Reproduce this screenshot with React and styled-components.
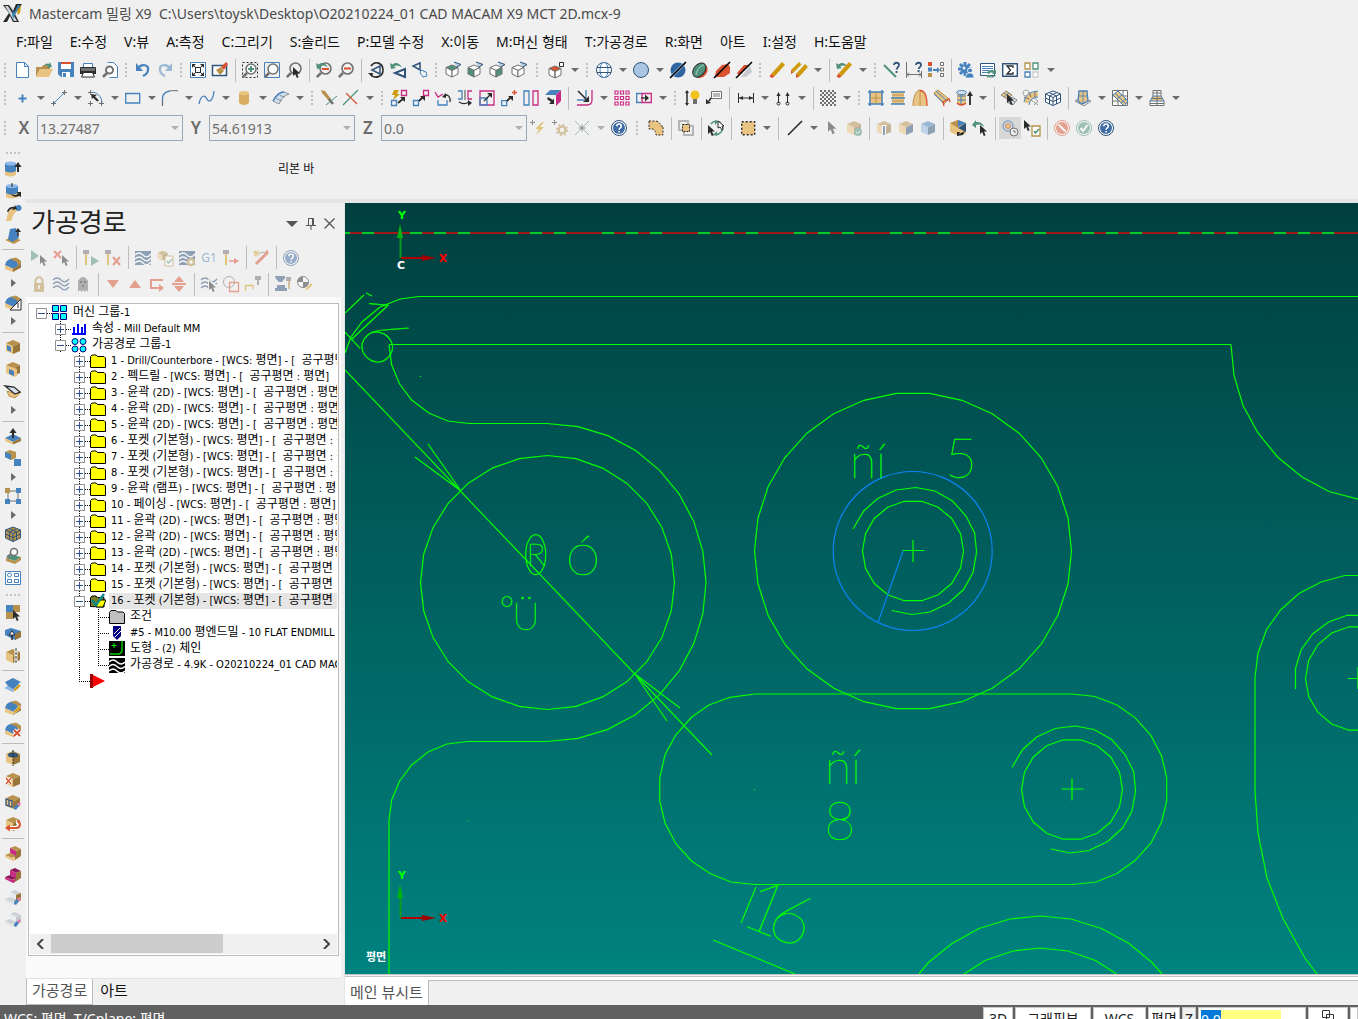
import React from 'react';
import styled, { createGlobalStyle, css } from 'styled-components';

const theme = {
  bg: '#f0f0f0',
  blue: '#4682bd',
  navy: '#2f5379',
  green: '#4f917b',
  red: '#d9512f',
  tan: '#e9c382',
  brown: '#b8924c',
  umber: '#9a753a',
  gray: '#707070',
  dark: '#2b2b2b',
  pink: '#c92a83',
  gold: '#cf9a0a',
};

const uiFont = '"Noto Sans", "Noto Sans CJK KR", sans-serif';
const treeFont =
  '"DejaVu Sans Condensed", "Liberation Sans", "Noto Sans CJK KR", sans-serif';

const GlobalStyle = createGlobalStyle`
  * {
    box-sizing: border-box;
  }

  body {
    background: ${theme.bg};
    color: #1a1a1a;
    font-family: ${uiFont};
    font-size: 14px;
    margin: 0;
    overflow: hidden;
  }

  button,
  input {
    font: inherit;
  }
`;

/* ---------- icons ---------- */

const { blue, navy, green, red, tan, brown, umber, gray, dark, pink, gold } =
  theme;

const Cube = ({ top = brown, left = tan, right = umber, stroke = 'none' }) => (
  <g stroke={stroke} strokeLinejoin="round">
    <path d="M8 1l7 3-7 3.500-7-3.500z" fill={top} />
    <path d="M1 4l7 3.500V15l-7-3z" fill={left} />
    <path d="M15 4L8 7.500V15l7-3z" fill={right} />
  </g>
);

const Slab = ({ top = blue }) => (
  <g>
    <path d="M0 9l8 3.500V16l-8-3z" fill={tan} />
    <path d="M16 8l-8 4.500V16l8-4.500z" fill={umber} />
    <path d="M0 9c1-3 2-5 5-6l6-1 5 3v3l-8 4.500z" fill={top} />
    <path d="M5 3l6-1.500L16 5v3l-3 1.500c0-2-1-3.500-3-4.500z" fill={brown} />
  </g>
);

const Steps = ({ a = brown, b = tan, c = umber, face = pink }) => (
  <g>
    <path d="M5 3l5-2 6 3-5 2z" fill={a} />
    <path d="M11 6l5-2v7l-6 4-1-4z" fill={c} />
    <path d="M5 3l6 3v5L5 8z" fill={face} />
    <path d="M0 10l5-2 6 3-4 2z" fill={a} />
    <path d="M0 10l7 3 3-1v3l-2 1-8-4z" fill={b} />
  </g>
);

const Cursor = ({ x = 0, y = 0, fill = dark }) => (
  <path
    d="M0 0v9l2.200-2 1.600 4 1.800-.800-1.600-3.800H7z"
    transform={`translate(${x} ${y})`}
    fill={fill}
  />
);

const Lens = ({ children }) => (
  <g fill="none">
    <path d="M5 11L.800 15.200" stroke={gray} strokeWidth="2.500" />
    <circle cx="9.500" cy="6.500" r="5.500" stroke={gray} strokeWidth="1.600" />
    {children}
  </g>
);

const WireCube = ({ top = '#fff', left = '#fff', right = '#fff' }) => (
  <g>
    <g stroke={gray} strokeLinejoin="round">
      <path d="M7 3l6 2.500-6 3-6-3z" fill={top} />
      <path d="M1 5.500l6 3V15l-6-3z" fill={left} />
      <path d="M13 5.500l-6 3V15l6-3z" fill={right} />
    </g>
    <path d="M9 0l7 2.500-5 3" fill="#b9cce2" stroke={navy} />
  </g>
);

const Waves = ({ stroke = navy }) => (
  <path
    d="M0 4q4-4 8 0t8-1M0 8q4-4 8 0t8-1M0 12q4-4 8 0t8-1"
    fill="none"
    stroke={stroke}
    strokeWidth="1.300"
  />
);

const Question = ({ fill = navy }) => (
  <g>
    <circle cx="8" cy="8" r="7.500" fill="#fff" stroke={fill} />
    <circle cx="8" cy="8" r="6" fill="#3f6ca5" />
    <path
      d="M5.800 6.300c0-3 4.500-3 4.500 0 0 1.700-2.200 1.500-2.200 3.400M8.100 11v1.600"
      fill="none"
      stroke="#fff"
      strokeWidth="1.600"
    />
  </g>
);

const Pencil = () => (
  <g>
    <path d="M2.500 11.500L13 0l3 2.800L5.500 14.500z" fill={gold} />
    <path d="M2.500 11.500l3 3-2.500 1.500-2.500-1.500z" fill={red} />
  </g>
);

const MiniPencil = () => (
  <path d="M8 15l1-3 5-5 2 1.500-5 5z" fill={gold} stroke="#fff" strokeWidth=".5" />
);

const Eraser = () => (
  <g>
    <path d="M9 13l3-3 2 2-3 4-2-1z" fill={blue} />
    <path d="M12 10l3-2 1 2-2 2z" fill="#e77cb4" />
  </g>
);

const Back = ({ fill = green }) => (
  <path d="M0 1l1 6 5-1-2-1.500c3-2 5-1 8 1C9 0 5 0 2.500 2.500z" fill={fill} />
);

const icons = {
  new: (
    <path d="M2.500.500h8l4 4v11h-12zM10.500.500v4h4" fill="#fff" stroke={blue} />
  ),
  open: (
    <g>
      <path d="M0 15V5h6l1-2h7v4H4z" fill={brown} />
      <path d="M0 15l4-8h13l-4 8z" fill={tan} />
      <path d="M8 4c1-3 4-3 5-2l1-2 2 5-5 1 1-2c-1-1-3-1-4 0z" fill={green} />
    </g>
  ),
  save: (
    <g>
      <path d="M0 0h16v15H3l-3-3z" fill={blue} />
      <path d="M3 0h10v7H3z" fill="#fff" />
      <path d="M3 0h10v2H3z" fill={red} />
      <path d="M4 10h8v5H4z" fill="#fff" />
      <path d="M5 11h3v4H5z" fill={blue} />
    </g>
  ),
  print: (
    <g>
      <path d="M3.500 5V1.500h9V5" fill="#fff" stroke={blue} />
      <path d="M0 6q0-1 1-1h14q1 0 1 1v6H0z" fill={dark} />
      <path d="M1 6h14v3H1z" fill={gray} />
      <path d="M3.500 10.500h9l2 4.500h-13z" fill="#fff" stroke={dark} />
    </g>
  ),
  preview: (
    <g>
      <path d="M5.500.500h6l4 4v11h-8" fill="#fff" stroke={blue} />
      <path d="M5 11l-4 4" stroke={gray} strokeWidth="2.500" />
      <circle cx="7.500" cy="8" r="3.500" fill="#fff" stroke={gray} strokeWidth="2" />
    </g>
  ),
  undo: (
    <g>
      <path d="M3 6c4-5 11-3 10 2 0 3-3 5-5 6" fill="none" stroke={blue} strokeWidth="2.200" />
      <path d="M1 1v8h7z" fill={blue} />
    </g>
  ),
  redo: (
    <g opacity=".5">
      <path d="M13 6C9 1 2 3 3 8c0 3 3 5 5 6" fill="none" stroke={blue} strokeWidth="2.200" />
      <path d="M15 1v8H8z" fill={blue} />
    </g>
  ),
  fit: (
    <g>
      <path d="M.500.500h15v15H.500z" fill="#fff" stroke={blue} />
      <path d="M5.500 5.500h5v5h-5zM3 3l3 3M13 3l-3 3M3 13l3-3M13 13l-3-3" fill="none" stroke={dark} />
      <path d="M2 2h4L2 6zM14 2v4l-4-4zM2 14v-4l4 4zM14 14h-4l4-4z" fill={dark} />
    </g>
  ),
  repaint: (
    <g>
      <path d="M.500 3.500h14v10H.500z" fill="#fff" stroke={navy} strokeWidth="1.500" />
      <path d="M4 8l5-3 3 4-4 4z" fill={brown} />
      <path d="M9 5l5-5 2 2-4 6z" fill={red} />
    </g>
  ),
  zoomWindow: (
    <g>
      <path d="M.500.500h15v15H.500z" fill="none" stroke={dark} strokeDasharray="2 2" />
      <circle cx="9" cy="7" r="5" fill="#fff" stroke={gray} strokeWidth="1.500" />
      <path d="M6 7h6M9 4v6" stroke={green} strokeWidth="2" />
      <path d="M5 11l-4 4" stroke={gray} strokeWidth="2.500" />
    </g>
  ),
  zoomTarget: (
    <g>
      <path d="M.500.500h15v15H.500z" fill="none" stroke={blue} />
      <circle cx="9" cy="7" r="5" fill="#fff" stroke={gray} strokeWidth="1.500" />
      <path d="M5 11l-4 4" stroke={gray} strokeWidth="2.500" />
    </g>
  ),
  zoomSelect: (
    <g>
      <Lens />
      <Cursor x={7} y={5} />
    </g>
  ),
  unzoomBack: (
    <g>
      <Lens>
        <path d="M6 7h7" stroke={red} strokeWidth="2" />
      </Lens>
      <Back />
    </g>
  ),
  unzoom: (
    <Lens>
      <path d="M6 6.500h7" stroke={red} strokeWidth="2" />
    </Lens>
  ),
  rotate: (
    <g fill="none">
      <path d="M3 4c4-6 12-3 12 4s-8 9-12 5" stroke={dark} strokeWidth="1.600" />
      <path d="M0 11l5 0-1 4z" fill={dark} />
      <path d="M12 4v8L4 8z" stroke={navy} strokeWidth="1.500" />
    </g>
  ),
  prevView: (
    <g>
      <Back />
      <path d="M15 7v8L5 11z" fill="#fff" stroke={navy} strokeWidth="2" />
    </g>
  ),
  nextView: (
    <g fill="none">
      <path d="M8 1v7L1 4z" stroke={navy} strokeWidth="1.500" />
      <path d="M9 8l5 2 1 4-4 1-3-4z" stroke={blue} />
    </g>
  ),
  topView: <WireCube top={green} />,
  frontView: <WireCube left={green} />,
  rightView: <WireCube right={green} />,
  isoView: <WireCube />,
  planes: (
    <g>
      <g stroke={gray}>
        <path d="M7 4l6 2.500-6 3-6-3z" fill={red} />
        <path d="M1 6.500l6 3V16l-6-3zM13 6.500l-6 3V16l6-3z" fill="#fff" />
      </g>
      <path d="M11.500.500h4v4h-4z" fill="#fff" stroke={dark} />
    </g>
  ),
  globe: (
    <g fill="#fff" stroke={navy}>
      <circle cx="8" cy="8" r="7.500" />
      <ellipse cx="8" cy="8" rx="4" ry="7.500" stroke={blue} />
      <path d="M1 5.500h14M1 10.500h14" />
    </g>
  ),
  sphere: <circle cx="8" cy="8" r="7.500" fill="#aac6e4" stroke={navy} />,
  shade: (
    <g>
      <circle cx="8" cy="8" r="7.500" fill="#2f65a0" />
      <path d="M1.500 14.500L14.500 1.500" stroke="#9cc0e4" strokeWidth="3" />
      <path d="M0 16L16 0" stroke="#000" strokeWidth="1.600" />
    </g>
  ),
  shadeGreen: (
    <g>
      <ellipse cx="9" cy="9" rx="7.500" ry="6" fill={red} transform="rotate(-50 9 9)" />
      <ellipse cx="7.500" cy="7.500" rx="8" ry="5.500" fill={green} stroke={dark} transform="rotate(-50 8 8)" />
      <path d="M4 13C5 7 8 4 12 3" fill="none" stroke="#a5cfc0" />
    </g>
  ),
  shadeRed: (
    <g>
      <path d="M2 9L8 3l6-1 2 3v6l-6 4H1z" fill={red} />
      <path d="M0 16L16 0" stroke="#000" strokeWidth="1.600" />
    </g>
  ),
  shadeHalf: (
    <g>
      <path d="M1 11L8 3h5L3 14z" fill={red} />
      <path d="M14 3l2 7-6 5H5z" fill="#c8ccd2" />
      <path d="M0 16L16 0" stroke="#000" strokeWidth="1.600" />
    </g>
  ),
  pencil: <Pencil />,
  pencils: (
    <g>
      <path d="M0 8l8-8 2.500 2.500-8 8z" fill={gold} />
      <path d="M0 8l2.500 2.500L0 12z" fill={red} />
      <path d="M5 12l9-10 3 3-9 10z" fill={gold} />
      <path d="M5 11.500l3 3-3 1.500z" fill={red} />
    </g>
  ),
  pencilBack: (
    <g>
      <Back />
      <Pencil />
    </g>
  ),
  analyze: (
    <g fill="none">
      <path d="M0 3l12 12" stroke={green} strokeWidth="2" />
      <path d="M10 3c0-3 5-3 5 0 0 2-2 2-2.500 4.500M12.500 9v2" stroke={navy} strokeWidth="1.800" />
    </g>
  ),
  analyzeDist: (
    <g fill="none">
      <path d="M.500 0v16M15.500 9v7M1 12.500h14M3 10.500l-2 2 2 2M13 10.500l2 2-2 2" stroke={gray} />
      <path d="M10 3c0-3 5-3 5 0 0 2-2 2-2.500 4M12.500 8v2" stroke={navy} strokeWidth="1.800" />
    </g>
  ),
  remap: (
    <g>
      <path d="M0 0h4v4H0z" fill={red} />
      <path d="M0 5.500h4v4H0z" fill={blue} />
      <path d="M0 11h4v4H0z" fill={brown} />
      <path d="M5 7h4V5l3 3-3 3V9H5z" fill={blue} />
      <path d="M12.500.500h3v3h-3zM12.500 6h3v3h-3zM12.500 11.500h3v3h-3z" fill="#fff" stroke={gray} />
    </g>
  ),
  gear: (
    <g>
      <g stroke={blue} strokeWidth="3">
        <path d="M7 0v14M0 7h14M2 2l10 10M12 2L2 12" />
      </g>
      <circle cx="6" cy="6" r="1.500" fill={theme.bg} />
      <circle cx="12" cy="8.500" r="2.500" fill={blue} stroke="#fff" />
      <path d="M7 16q1-5 5-5t4 5z" fill={blue} stroke="#fff" strokeWidth=".7" />
    </g>
  ),
  list: (
    <g>
      <path d="M.500 1.500h14v12H.500z" fill="#fff" stroke={navy} />
      <path d="M2 4.500h11M2 6.500h11M2 8.500h7M2 10.500h6" stroke={blue} />
      <path d="M7 11c2-4 6-3 7-2l2-1v4h-4l1-1c-2-1-3 0-4 1zM16 13c-2 3-5 3-7 2l-2 1v-3h4l-1 1c2 1 3 0 4-1z" fill={green} />
    </g>
  ),
  sigma: (
    <g>
      <path d="M.700 1.700h14.600v12.600H.700z" fill="#fff" stroke={navy} strokeWidth="1.400" />
      <path d="M11 6V4H5l3.500 4L5 12h6v-2" fill="none" stroke={dark} strokeWidth="1.300" />
    </g>
  ),
  tiles: (
    <g fill="#fff" strokeWidth="1.300">
      <path d="M1 1h5v6H1z" stroke={brown} />
      <path d="M9 1h5v6H9z" stroke={green} />
      <path d="M1 10h5v5H1z" stroke={blue} />
      <path d="M9 10h5v5H9z" stroke="#ccc" />
    </g>
  ),
  point: <path d="M8.500 4.500v8M4.500 8.500h8" stroke={blue} strokeWidth="2" />,
  line: (
    <g>
      <path d="M3 13L13 3" stroke={blue} />
      <path d="M0 13.500h5M2.500 11v5M11 2.500h5M13.500 0v5" stroke={gray} />
    </g>
  ),
  arc: (
    <g fill="none">
      <path d="M3 2.500c6-1 11 4 11 11" stroke={blue} />
      <path d="M0 2.500h5M2.500 0v5M11 13.500h5M13.500 11v5M0 13.500h5M2.500 11v5" stroke={gray} />
      <path d="M3 4l6 1-2 1.500 4 4-2 1-4-4-1 2z" fill={dark} />
    </g>
  ),
  rect: <path d="M.700 3.500h14v9.500H.700z" fill="none" stroke={blue} strokeWidth="1.300" />,
  fillet: (
    <g fill="none">
      <path d="M.500 16V8Q1 2 8 1" stroke={blue} strokeWidth="1.300" />
      <path d="M8 .700h8M.500 10v6" stroke={gray} />
    </g>
  ),
  spline: (
    <path d="M0 14C2 4 6 5 8 9s6 2 7-8" fill="none" stroke={blue} strokeWidth="1.300" />
  ),
  cylinder: (
    <g>
      <path d="M3 3v10q5 4 10 0V3z" fill="#d9ad62" />
      <ellipse cx="8" cy="3" rx="5" ry="2" fill={tan} />
    </g>
  ),
  surface: (
    <g fill="#cfe0f0" stroke={gray} strokeWidth=".7">
      <path d="M0 11Q5 2 11 2l5 2Q9 6 6 14z" />
      <path d="M2 8l7 3M5 5l7 2" />
      <path d="M0 11Q5 2 11 2" stroke={blue} strokeWidth="1.500" />
    </g>
  ),
  trim: (
    <g>
      <path d="M0 0l4 1 6 8-2 2-7-8z" fill={brown} />
      <path d="M8 9l4 5" stroke={gray} strokeWidth="2.500" />
      <path d="M5 15l11-9" stroke={green} />
    </g>
  ),
  cross: (
    <g>
      <path d="M0 15L15 0" stroke={green} strokeWidth="1.300" />
      <path d="M3 3l11 11" stroke={red} strokeWidth="1.300" />
    </g>
  ),
  xformDyn: (
    <g fill="none">
      <path d="M3 0h5L6 4h3L2 10l2-5H1z" fill={gold} />
      <path d="M10.500.500h5v5h-5z" stroke={pink} strokeWidth="1.300" />
      <path d="M.500 10.500h5v5h-5z" stroke={blue} strokeWidth="1.300" />
      <path d="M7 13l5-4" stroke={dark} strokeWidth="1.800" />
      <path d="M9 7h5v5z" fill={dark} />
    </g>
  ),
  xformMove: (
    <g fill="none">
      <path d="M10.500.500h5v5h-5z" stroke={pink} strokeWidth="1.300" />
      <path d="M.500 10.500h5v5h-5z" stroke={blue} strokeWidth="1.300" />
      <path d="M6 11l4-4" stroke={dark} strokeWidth="1.800" />
      <path d="M7 6h5v5z" fill={dark} />
    </g>
  ),
  xformRotate: (
    <g fill="none" strokeWidth="1.300">
      <path d="M0 2l3 5 5-3M3 7L1 4" stroke={pink} />
      <path d="M3 10v5h9v-5" stroke={blue} />
      <path d="M9 6c4-3 7 2 6 6" stroke={dark} />
      <path d="M7 7l4-4v5z" fill={dark} />
    </g>
  ),
  mirror: (
    <g fill="none" strokeWidth="1.300">
      <path d="M1 1h4v8H1" stroke={blue} />
      <path d="M15 1h-4v8h4" stroke={pink} />
      <path d="M8 0v10" stroke={gray} />
      <path d="M2 12c3 2 7 2 10 0" stroke={dark} />
      <path d="M15 13l-4-3v6z" fill={dark} />
    </g>
  ),
  scale: (
    <g fill="none" strokeWidth="1.300">
      <path d="M1 1h14v14H1z" stroke={pink} />
      <path d="M1 8h7v7H1z" stroke={blue} />
      <path d="M5 11l6-6" stroke={dark} />
      <path d="M8 3h5v5z" fill={dark} />
    </g>
  ),
  moveOrigin: (
    <g fill="none" strokeWidth="1.300">
      <path d="M.700 10.700h5v5h-5z" stroke={blue} />
      <path d="M6 11l4-4" stroke={dark} strokeWidth="1.800" />
      <path d="M7 6h5v5z" fill={dark} />
      <path d="M13.500 0v5M11 2.500h5" stroke={red} />
    </g>
  ),
  translate: (
    <g fill="none" strokeWidth="1.300">
      <path d="M1 1h5v14H1z" stroke={blue} />
      <path d="M10 1h5v14h-5z" stroke={pink} />
    </g>
  ),
  project: (
    <g>
      <path d="M0 5l5-5h11l-5 5z" fill={blue} />
      <path d="M11 5l5-5v11l-5 5z" fill={pink} />
      <path d="M3 7l5 3 1-2v6H4l2-2-4-3z" fill={dark} />
    </g>
  ),
  offset: (
    <g fill="none" strokeWidth="1.300">
      <path d="M0 10h6q3 0 3-4V0" stroke={blue} />
      <path d="M0 15h10q5 0 5-5V0" stroke={pink} />
      <path d="M1 1l8 8" stroke={dark} strokeWidth="1.600" />
      <path d="M12 12H6l6-6z" fill={dark} />
    </g>
  ),
  array: (
    <g fill="#fff" stroke={pink} strokeWidth="1.200">
      <path d="M1 1h3v3H1zM6.500 1h3v3h-3zM12 1h3v3h-3zM1 6.500h3v3H1zM6.500 6.500h3v3h-3zM12 6.500h3v3h-3zM1 12h3v3H1zM6.500 12h3v3h-3zM12 12h3v3h-3z" />
    </g>
  ),
  stretch: (
    <g fill="none" strokeWidth="1.300">
      <path d="M6 3.500H.700v9H6" stroke={blue} />
      <path d="M6 3.500h9.300v9H6z" stroke={pink} />
      <path d="M5 8h4" stroke={dark} />
      <path d="M9 4.500L13 8l-4 3.500z" fill={dark} />
    </g>
  ),
  smartDim: (
    <g>
      <path d="M3 2v12" stroke={dark} strokeWidth="1.500" />
      <path d="M3 0l2 3H1zM3 16l2-3H1z" fill={dark} />
      <circle cx="11" cy="5" r="4.500" fill="#f1c21b" />
      <path d="M9 9h4v5H9z" fill={gray} />
    </g>
  ),
  note: (
    <g>
      <path d="M5.500 1.500h10v7h-10z" fill="#fff" stroke={gray} />
      <path d="M7 4h7M7 6h7" stroke={gray} />
      <path d="M5 8l-2 3" stroke={dark} strokeWidth="1.500" />
      <path d="M0 14V9l5 4z" fill={dark} />
    </g>
  ),
  dimH: (
    <g stroke={dark}>
      <path d="M.500 3v10M15.500 3v10M1 8h14" />
      <path d="M1 8l4-2v4zM15 8l-4-2v4z" fill={dark} stroke="none" />
    </g>
  ),
  dimV: (
    <g stroke={dark} fill="none">
      <path d="M3.500 4v9M12.500 4v9" />
      <path d="M3.500 2l2 4h-4zM12.500 2l2 4h-4z" fill={dark} stroke="none" />
      <circle cx="3.500" cy="13.500" r="1.500" />
      <circle cx="12.500" cy="13.500" r="1.500" />
    </g>
  ),
  hatch: (
    <g fill={gray}>
      {[0, 1, 2, 3, 4, 5, 6, 7].map(r =>
        [0, 1, 2, 3].map(c => (
          <rect key={`${r}-${c}`} x={c * 4 + (r % 2) * 2} y={r * 2} width="2" height="2" />
        ))
      )}
    </g>
  ),
  netSurf: (
    <g>
      <path d="M2 2h12v12H2z" fill={tan} />
      <path d="M0 2h16M0 14h16M2 0v16M14 0v16" stroke={blue} strokeWidth="1.500" />
      <path d="M8 2v12M2 8h12" stroke={brown} />
    </g>
  ),
  ruled: (
    <g>
      <path d="M2 2h12v12H2z" fill={tan} />
      <path d="M1 2h14M1 8h14M1 14h14" stroke={blue} strokeWidth="1.300" />
      <path d="M2 5h12M2 11h12" stroke={brown} />
    </g>
  ),
  revolve: (
    <g>
      <path d="M1 16C1 5 5 0 8 0s7 5 7 16z" fill={tan} />
      <path d="M1 16C1 5 5 0 8 0v16" fill="none" stroke={brown} />
      <path d="M8 .500c4 0 7 5 7 15.500" fill="none" stroke={red} strokeWidth="1.300" />
    </g>
  ),
  sweep: (
    <g>
      <path d="M0 3l4-3 11 9-5 5z" fill={tan} stroke={brown} />
      <path d="M2 1l11 10M0 4l10 9" stroke={blue} />
      <path d="M10 16l-1-4 6-3 1 3" fill="none" stroke={red} strokeWidth="1.300" />
    </g>
  ),
  extrudeSurf: (
    <g>
      <path d="M1 2v12q4 3 9 0V2z" fill={tan} />
      <ellipse cx="5.500" cy="2.500" rx="5" ry="2" fill="#d7e3ef" stroke={blue} />
      <path d="M1 6h9M1 10h9M5 4v11" stroke={blue} />
      <path d="M1 13q4 4 9 0" fill="none" stroke={red} strokeWidth="1.500" />
      <path d="M14 15V5" stroke={dark} strokeWidth="1.800" />
      <path d="M14 1l3 5h-6z" fill={dark} />
    </g>
  ),
  trimSurf: (
    <g>
      <g stroke={gray} strokeWidth=".8">
        <path d="M0 5l5-4 6 4-5 4z" fill={tan} />
        <path d="M6 12l5-5 5 3-4 5z" fill="#ddd" />
        <path d="M3 3l6 4M3 7l5-4M9 9l5 3" stroke={blue} />
      </g>
      <Cursor x={6} y={4} />
    </g>
  ),
  filletSurf: (
    <g fill="none">
      <path d="M4 13q0-8 11-9" stroke={tan} strokeWidth="5" />
      <path d="M1 12q1-10 14-11M6 15q1-8 9-8" stroke={blue} />
      <path d="M1 7l5 2M6 2l2 5M12 1v6" stroke={gray} />
      <path d="M8 10l7 5M11 8l4 3-4 4" stroke="#9a9a9a" />
      <circle cx="3" cy="3" r="3" stroke="#aaa" />
    </g>
  ),
  cubeGrid: (
    <g fill="#fff" stroke={navy}>
      <path d="M8 1l7.500 3v8L8 15.500.500 12V4z" />
      <path d="M.500 4L8 7.500 15.500 4M8 7.500v8M.500 8L8 11.500 15.500 8M4 2.500l7.500 3.500v8M12 2.500L4.500 6v8" fill="none" />
    </g>
  ),
  meshA: (
    <g stroke={gray} strokeWidth=".8">
      <path d="M0 11l5-3 11 3-7 5z" fill="#e4e4e4" />
      <path d="M4 1h8l1 10-6 3-4-3z" fill={tan} stroke={blue} strokeWidth="1.300" />
      <path d="M8 1v12M4 6h9" stroke={blue} />
    </g>
  ),
  meshB: (
    <g>
      <path d="M.500.500h15v15H.500zM.500 6h15M.500 11h15M6 0v16M11 0v16" fill="#fff" stroke={gray} />
      <path d="M1 5l5-4 10 10-4 5z" fill={tan} stroke={blue} />
      <path d="M3 3l11 11M5 9l5-4M9 13l5-4" stroke={blue} />
    </g>
  ),
  meshC: (
    <g>
      <path d="M4 .500h8v6l3 5v4H1v-4l3-5z" fill="#fff" stroke={gray} />
      <path d="M4 6h8l3 5H1z" fill={tan} stroke={blue} />
      <path d="M4 3h8M3 8.500h10M1 13.500h14M8 0v16" stroke={gray} />
    </g>
  ),
  bolt: (
    <g>
      <path d="M2.500 0v5M0 2.500h5" stroke={dark} />
      <path d="M12 2L5 9h4l-3 6 8-8h-4l4-5z" fill={gold} />
    </g>
  ),
  gearAdd: (
    <g>
      <path d="M2.500 0v5M0 2.500h5" stroke={dark} />
      <g fill="none" stroke={brown}>
        <circle cx="10" cy="10" r="3.500" strokeWidth="2.500" />
        <circle cx="10" cy="10" r="5.500" strokeWidth="1.500" strokeDasharray="2 2.300" />
      </g>
    </g>
  ),
  crossPoint: (
    <g>
      <path d="M1 1l14 14M15 1L1 15" stroke={green} />
      <path d="M8 4.500v7M4.500 8h7" stroke={dark} />
    </g>
  ),
  help: <Question />,
  selChain: (
    <g fill={tan} stroke={dark} strokeDasharray="2 1.500">
      <path d="M1 1h7q4 1 5 5h2v9H8q0-4-3-6H1z" />
    </g>
  ),
  selInside: (
    <g>
      <path d="M1 1h9v9H1zM6 6h9v9H6z" fill="none" stroke="#b5b5b5" strokeWidth="2" />
      <path d="M4.500 4.500h7v7h-7z" fill={tan} stroke={dark} strokeDasharray="2 1" />
    </g>
  ),
  selRotate: (
    <g fill="none">
      <path d="M3 4c3-4 8-3 10-1M13 12c-3 4-8 3-10 1M15 7q0 3-2 5" stroke={green} strokeWidth="1.500" />
      <Cursor x={0} y={5} />
      <path d="M10 1v7l2-1 2 3 1-1-1-3h2z" fill="#fff" stroke={dark} />
      <path d="M7 0l3 2-3 3zM9 16l-3-2 3-3z" fill={green} />
    </g>
  ),
  selWindow: (
    <path d="M1.700 1.700h13v13h-13z" fill={tan} stroke={dark} strokeWidth="1.400" strokeDasharray="2 2" />
  ),
  lineStyle: <path d="M1 15L15 1" stroke={dark} strokeWidth="1.600" />,
  cursor: (
    <g transform="translate(4 1) scale(1.200)">
      <Cursor fill={dark} />
    </g>
  ),
  cubeCheck: (
    <g>
      <Cube />
      <circle cx="12" cy="12" r="4" fill={green} />
      <path d="M10 12l1.500 1.500L14 11" stroke="#fff" fill="none" />
    </g>
  ),
  cubeFace: (
    <g>
      <Cube />
      <path d="M6 5h4v10H6z" fill="#fff" />
      <path d="M7 6h2v9H7z" fill={navy} />
    </g>
  ),
  cubeSide: <Cube right={navy} />,
  cubeBlue: <Cube top={blue} left="#8fb9e6" right={navy} />,
  cubeSplit: (
    <g>
      <path d="M8 0l8 3v10l-4 2-4-2-1 2-7-3V3z" fill={tan} />
      <path d="M0 3l8-3v8z" fill={brown} />
      <path d="M8 0l8 3-8 4z" fill={blue} />
      <path d="M16 3v9l-8-4z" fill={navy} />
      <path d="M7 12l3 0-1 2 6-3-2 4-6 1z" fill={dark} />
    </g>
  ),
  backSel: (
    <g>
      <path d="M0 5l4-5v2c4 0 7 1 8 5-3-3-5-3-8-2v3z" fill={green} />
      <Cursor x={8} y={5} />
    </g>
  ),
  clockSel: (
    <g fill="none">
      <circle cx="6" cy="6" r="5" stroke="#8aa9c9" strokeWidth="1.500" />
      <circle cx="6" cy="6" r="2.500" fill={tan} stroke="#d08a70" />
      <circle cx="12" cy="12" r="4" fill="#eee" stroke={gray} />
      <path d="M12 10v2h2" stroke={gray} />
    </g>
  ),
  clipSel: (
    <g>
      <Cursor />
      <path d="M8 6h8v10H8z" fill="#fff" stroke={brown} strokeWidth="1.300" />
      <path d="M10 11l1.500 2L15 9" fill="none" stroke={green} strokeWidth="1.500" />
    </g>
  ),
  stop: (
    <g>
      <circle cx="8" cy="8" r="7.500" fill="#fff" stroke={red} />
      <circle cx="8" cy="8" r="6" fill={red} />
      <path d="M4.500 4.500l7 7" stroke="#fff" strokeWidth="2" />
    </g>
  ),
  ok: (
    <g>
      <circle cx="8" cy="8" r="7.500" fill="#fff" stroke={green} />
      <circle cx="8" cy="8" r="6" fill={green} />
      <path d="M4.500 8l2.500 3 4.500-6" fill="none" stroke="#fff" strokeWidth="2" />
    </g>
  ),
  extrude: (
    <g>
      <path d="M0 9v5q5 3 11 0V9z" fill={tan} />
      <path d="M0 2v8q5 3 11 0V2z" fill={blue} />
      <ellipse cx="5.500" cy="2.500" rx="5.500" ry="2" fill="#8fb9e6" />
      <path d="M13 11V4" stroke={dark} strokeWidth="2" />
      <path d="M13 1l3.500 5h-7z" fill={dark} />
    </g>
  ),
  revolveSolid: (
    <g>
      <path d="M1 9v5q5 3 12 0V9z" fill={tan} />
      <path d="M1 3v7q5 3 12 0V3z" fill={blue} />
      <ellipse cx="7" cy="3" rx="6" ry="2" fill="#8fb9e6" />
      <path d="M7 0v4" stroke={dark} />
      <path d="M5 9c1 3 5 4 8 2l-1-2h4v5l-2-1c-4 2-8 0-9-4z" fill={dark} />
    </g>
  ),
  sweepSolid: (
    <g>
      <path d="M1 16l2-8q3-5 8-6l3 3q-5 2-6 6l-2 5z" fill={tan} />
      <circle cx="13.500" cy="3" r="3" fill={blue} />
      <path d="M2 6q3-5 7-4l1-2 2 4-5 1 1-1.500q-3 0-5 4z" fill={dark} />
    </g>
  ),
  loftSolid: (
    <g>
      <path d="M0 13l7-3 9 3-7 4z" fill={brown} />
      <path d="M5 2l6-1 3 10-7 4-4-3z" fill={blue} />
      <path d="M13 9V4" stroke={dark} strokeWidth="1.500" />
      <path d="M13 1l3 4h-6z" fill={dark} />
    </g>
  ),
  filletSolid: <Slab />,
  chamferSolid: (
    <g>
      <Slab />
      <path d="M16 5v11H5z" fill="#fff" stroke={dark} />
      <path d="M13 9v5" stroke={dark} />
    </g>
  ),
  shell: (
    <g>
      <Cube />
      <path d="M2 6l4 2v5l-4-2z" fill={blue} />
    </g>
  ),
  boolean: (
    <g>
      <Cube />
      <path d="M4 8l3-2 5 2v7l-3 1-5-3z" fill={tan} />
      <path d="M4 8l5 2v5l-5-2z" fill={blue} />
    </g>
  ),
  draft: (
    <g>
      <path d="M2 8l6 2 8-1-6 6-6-2z" fill={tan} stroke={brown} />
      <path d="M0 3l9 1 6 5-5 2z" fill="#d7e3ef" stroke={dark} strokeWidth="1.300" />
    </g>
  ),
  pushPull: (
    <g>
      <path d="M0 10l8-4 8 4-8 4z" fill={blue} />
      <path d="M0 10l8 4v2.500L0 13z" fill={tan} />
      <path d="M16 10l-8 4v2.500l8-3.500z" fill={umber} />
      <path d="M8 10V4" stroke={dark} strokeWidth="2" />
      <path d="M8 0l3.500 5h-7z" fill={dark} />
    </g>
  ),
  moveSolid: (
    <g>
      <path d="M0 2l5-2 6 2v6l-5 2-6-3z" fill={brown} />
      <path d="M0 2l6 2v6L0 7z" fill={blue} />
      <path d="M9 9h7v7H9z" fill={blue} />
    </g>
  ),
  pattern: (
    <g>
      <path d="M3 3h10v10H3z" fill="none" stroke={gray} />
      <path d="M0 0h5v5H0z" fill={brown} />
      <path d="M11 0h5v5h-5zM0 11h5v5H0zM11 11h5v5h-5z" fill={blue} />
    </g>
  ),
  simplify: (
    <g stroke={navy}>
      <path d="M8 1l7.500 3v8L8 15.500.500 12V4z" fill={brown} />
      <path d="M.500 4L8 7.500 15.500 4M8 7.500v8M.500 8L8 11.500 15.500 8M4 2.500l7.500 3.500v8M12 2.500L4.500 6v8" fill="none" />
    </g>
  ),
  findFeature: (
    <g>
      <path d="M1 10l6-3 9 2-6 4z" fill={green} />
      <path d="M1 10l9 3v3l-9-3zM16 9v3l-6 4v-3z" fill={brown} />
      <circle cx="9" cy="4" r="3.500" fill="#fff" stroke={gray} strokeWidth="1.500" />
      <path d="M6 6L2 9" stroke={gray} strokeWidth="2" />
    </g>
  ),
  layout: (
    <g fill="#fff" stroke={blue}>
      <path d="M.500 1.500h15v13H.500z" />
      <circle cx="4.500" cy="5" r="2" />
      <path d="M9.500 3.500h4v3h-4zM2.500 9.500h4v3h-4zM9.500 9.500h4v3h-4z" />
    </g>
  ),
  selSolid: (
    <g>
      <path d="M1 1h7v7H1z" fill={blue} />
      <path d="M8 1h7v7H8zM1 8h7v7H1z" fill={brown} />
      <Cursor x={8} y={6} />
    </g>
  ),
  modify: (
    <g>
      <path d="M0 4l6-2 10 3v6l-6 3-10-5z" fill={blue} />
      <path d="M10 8l6-3v6l-6 3z" fill={umber} />
      <path d="M7 14V8" stroke={dark} strokeWidth="1.500" />
      <path d="M7 5l3 4H4z" fill="#fff" stroke={dark} />
    </g>
  ),
  splitSolid: (
    <g>
      <Cube />
      <path d="M11 0v16" stroke="#fff" strokeWidth="3" />
      <path d="M11 0v16" stroke={dark} strokeDasharray="3 1" />
    </g>
  ),
  editSolid: (
    <g>
      <path d="M0 5l8-4 8 4-2 1v5l-6 4-8-4 3-2z" fill={blue} />
      <path d="M0 7l3 2-3 2 8 4v-3z" fill="#8fb9e6" />
      <MiniPencil />
    </g>
  ),
  editFillet: (
    <g>
      <Slab />
      <MiniPencil />
    </g>
  ),
  removeFillet: (
    <g>
      <Slab />
      <path d="M9 9l6 6M15 9l-6 6" stroke="#fff" strokeWidth="4" />
      <path d="M9 9l6 6M15 9l-6 6" stroke={red} strokeWidth="2" />
    </g>
  ),
  holeAxis: (
    <g>
      <Cube left={tan} />
      <ellipse cx="8" cy="5" rx="5" ry="2.500" fill={navy} />
      <path d="M8 0v16" stroke={dark} strokeDasharray="2 1" />
    </g>
  ),
  removeFace: (
    <g>
      <Cube />
      <path d="M1 6l5 6M6 6l-5 6" stroke="#fff" strokeWidth="3" />
      <path d="M1 6l5 6M6 6l-5 6" stroke={red} strokeWidth="1.300" />
    </g>
  ),
  historyCube: (
    <g>
      <Cube />
      <path d="M1 5l6 2v6l-6-2zM4 6v6" fill={tan} stroke={navy} strokeWidth="1.300" />
      <Eraser />
    </g>
  ),
  undoCube: (
    <g>
      <Cube />
      <path d="M4 12h6c5 0 5-6 1-6" fill="none" stroke="#fff" strokeWidth="4" />
      <path d="M4 12h7c5 0 5-6 1-7" fill="none" stroke={red} strokeWidth="2" />
      <path d="M0 12l5-3.500v7z" fill={red} />
    </g>
  ),
  faceColor: <Steps />,
  bodyColor: <Steps a="#8d1b5c" b={pink} />,
  clearFace: (
    <g>
      <Steps a="#cdd2d6" b="#dfe3e6" face="#e9ecee" />
      <Eraser />
    </g>
  ),
  clearBody: (
    <g>
      <Steps a="#cdd2d6" b="#dfe3e6" c="#c3c8cc" face="#e9ecee" />
      <Eraser />
    </g>
  ),
  selAllOps: (
    <g>
      <path d="M0 0v11l8-5z" fill={green} />
      <Cursor x={9} y={5} />
    </g>
  ),
  unselOps: (
    <g>
      <path d="M1 1l7 7M8 1L1 8" stroke={red} strokeWidth="2" />
      <Cursor x={9} y={5} />
    </g>
  ),
  regenOps: (
    <g>
      <path d="M0 0h6v4H0z" fill={gray} />
      <path d="M2 4h2v11H2z" fill={gold} />
      <path d="M8 6v10l8-5z" fill={green} />
    </g>
  ),
  regenDirty: (
    <g>
      <path d="M0 0h6v4H0z" fill={gray} />
      <path d="M2 4h2v11H2z" fill={gold} />
      <path d="M8 7l7 8M15 7l-7 8" stroke={red} strokeWidth="2" />
    </g>
  ),
  backplot: (
    <g>
      <path d="M0 1h16v14H0z" fill={navy} />
      <path d="M0 5q4-4 8 0t8-1M0 9q4-4 8 0t8-1M0 13q4-4 8 0t8-1" fill="none" stroke="#fff" strokeWidth="1.300" />
    </g>
  ),
  verify: (
    <g>
      <g transform="scale(.7)">
        <Cube />
      </g>
      <path d="M8 6h8v10H8z" fill="#fff" stroke={brown} />
      <path d="M10 11l1.500 2L15 9" fill="none" stroke={green} strokeWidth="1.300" />
    </g>
  ),
  simulate: (
    <g>
      <path d="M0 1h16v14H0z" fill={navy} />
      <path d="M0 5q4-4 8 0t8-1M0 9q4-4 8 0M0 13q4-4 8 0" fill="none" stroke="#fff" strokeWidth="1.300" />
      <circle cx="12" cy="12" r="3" fill="#fff" stroke={brown} strokeWidth="2.500" />
    </g>
  ),
  toolPost: (
    <g>
      <path d="M0 0h6v4H0z" fill={gray} />
      <path d="M2 4h2v11H2z" fill={gold} />
      <path d="M6 11h6" stroke={red} strokeWidth="1.500" />
      <path d="M11 8l5 3-5 3z" fill={red} />
    </g>
  ),
  highfeed: (
    <g>
      <path d="M3 14L13 4q2-2 0-3" fill="none" stroke={red} strokeWidth="3" />
      <path d="M3 0v7M0 3h7M1 1l5 5M6 1L1 6" stroke={gold} />
      <path d="M6 4l3-2 4 1" fill="none" stroke={gray} />
    </g>
  ),
  lock: (
    <g>
      <path d="M4.500 8V4q3.500-6 7 0v4" fill="none" stroke={brown} strokeWidth="2" />
      <path d="M3 7h10v9H3z" fill={brown} />
      <path d="M8 9v4" stroke="#fff" strokeWidth="1.500" />
    </g>
  ),
  toolpath: <Waves />,
  ghost: (
    <g>
      <path d="M3 16V5q5-8 10 0v11l-2-2-1.500 2L8 14l-1.500 2L5 14z" fill={gray} />
      <circle cx="6" cy="6" r="1" />
      <circle cx="10" cy="6" r="1" />
      <path d="M7 9h2v2H7z" fill={dark} />
    </g>
  ),
  down: <path d="M2 4h12l-6 8z" fill={red} />,
  up: <path d="M2 12h12L8 4z" fill={red} />,
  loopArrow: (
    <g>
      <path d="M14 4H2v8h9" fill="none" stroke={red} strokeWidth="2" />
      <path d="M10 8l5 4-5 4z" fill={red} />
    </g>
  ),
  upDown: <path d="M3 6l5-6 5 6zM1 7h14v2H1zM3 10h10l-5 6z" fill={red} />,
  pathSel: (
    <g>
      <Waves />
      <path d="M7 3v12h9V9z" fill={theme.bg} />
      <Cursor x={8} y={5} />
    </g>
  ),
  shapes: (
    <g fill="none">
      <circle cx="6" cy="6" r="5.500" stroke={gray} />
      <path d="M6.500 6.500h9v9h-9z" stroke={red} strokeWidth="1.300" />
    </g>
  ),
  toolAxis: (
    <g>
      <path d="M10 0h6v4h-6zM12 4h2v5h-2z" fill={gray} />
      <path d="M.500 15V9.500H8V13" fill="none" stroke={gold} strokeWidth="1.300" />
    </g>
  ),
  machine: (
    <g fill={navy}>
      <path d="M0 0h10v2l-3 4H4L1 3zM0 12h12v3H0zM2 9h8v3H2z" />
      <path d="M11 1h5v4h-5z" fill={gray} />
      <path d="M13 5h2v8h-2z" fill={brown} />
    </g>
  ),
  target: (
    <g>
      <circle cx="6" cy="6" r="5.500" fill="#fff" stroke={dark} />
      <path d="M6 .500V6H.500A5.500 5.500 0 0 1 6 .500M6 11.500V6h5.500A5.500 5.500 0 0 1 6 11.500" fill={dark} />
      <MiniPencil />
    </g>
  ),
};

const IconSvg = styled.svg`
  display: block;
  flex: none;
  height: 16px;
  overflow: visible;
  width: 16px;
`;

const Icon = ({ name }) => (
  <IconSvg viewBox="0 0 16 16" aria-hidden="true">
    {icons[name]}
  </IconSvg>
);

/* ---------- toolbars ---------- */

const plainButton = css`
  align-items: center;
  background: none;
  border: 0;
  display: flex;
  flex: none;
  justify-content: center;
  margin: 0;
  padding: 0;
`;

const IconButton = styled.button`
  ${plainButton};
  height: 22px;
  opacity: ${props => (props.$faded ? 0.5 : 1)};
  width: 22px;
  ${props => props.$pressed && 'background: #d8d8d8;'}

  &:hover {
    background: #dce9f5;
  }
`;

const ArrowButton = styled.button`
  ${plainButton};
  height: 22px;
  opacity: ${props => (props.$faded ? 0.5 : 1)};
  width: 15px;

  &::after {
    border: 4px solid transparent;
    border-bottom: 0;
    border-top-color: #6b6b6b;
    content: '';
  }
`;

const Sep = styled.span`
  align-self: center;
  border-left: 1px solid #bdbdbd;
  flex: none;
  height: 23px;
  margin: 0 ${props => (props.$wide ? 5 : 3)}px 0 4px;
`;

const Grip = styled.span`
  align-self: center;
  background: repeating-linear-gradient(#bfbfbf 0 2px, transparent 2px 4px);
  flex: none;
  height: 14px;
  margin: ${props => (props.$wide ? '0 7px 0 6px' : '0 5px 0 4px')};
  width: 2px;
`;

const ToolbarRow = styled.div`
  align-items: center;
  display: flex;
  flex: none;
  height: ${props => props.$height || 28}px;
  padding-left: ${props => props.$indent || 0}px;
`;

// "|" is a separator, ":" a grip, doubled they take more room; "+" adds a
// drop-down arrow, "~" fades the button and "!" shows it pressed
const Tools = ({ items }) =>
  items.split(' ').map((item, i) => {
    if (item[0] === '|') {
      return <Sep key={i} $wide={item === '||'} />;
    }
    if (item[0] === ':') {
      return <Grip key={i} $wide={item === '::'} />;
    }
    const name = item.replace(/[+~!]/g, '');
    const faded = item.includes('~');
    return (
      <React.Fragment key={i}>
        <IconButton
          type="button"
          aria-label={name}
          $faded={faded}
          $pressed={item.includes('!')}
        >
          <Icon name={name} />
        </IconButton>
        {item.includes('+') && (
          <ArrowButton
            type="button"
            aria-label={`${name} options`}
            $faded={faded}
          />
        )}
      </React.Fragment>
    );
  });

/* ---------- page frame ---------- */

const Page = styled.div`
  display: flex;
  flex-direction: column;
  height: 100vh;
  overflow: hidden;
`;

const TitleBar = styled.header`
  align-items: center;
  color: #4a4a4a;
  display: flex;
  flex: none;
  font-size: 14px;
  gap: 6px;
  height: 27px;
  padding: 0 0 1px 3px;
  white-space: pre;
`;

const AppLogo = styled.svg`
  flex: none;
  height: 20px;
  width: 20px;
`;

const MenuBar = styled.nav`
  align-items: center;
  display: flex;
  flex: none;
  gap: 17px;
  height: 29px;
  padding: 0 0 1px 16px;
`;

const MenuItem = styled.button`
  ${plainButton};
  color: #111;
  font-size: 14px;
  white-space: nowrap;
`;

const AxisLabel = styled.label`
  color: #6b6b6b;
  font-size: 17px;
  font-weight: 600;
  line-height: 24px;
  text-align: center;
  width: 26px;
`;

const CoordBox = styled.div`
  align-items: center;
  border: 1px solid #98a6b8;
  display: flex;
  height: 26px;
  width: 146px;

  input {
    background: none;
    border: 0;
    color: #6e6e6e;
    flex: 1;
    font-size: 14px;
    min-width: 0;
    padding: 0 2px;
  }
`;

const Ribbon = styled.div`
  border-bottom: 4px solid #e5e5e5;
  color: #111;
  flex: none;
  font-size: 12px;
  line-height: 20px;
  padding: 15px 0 20px 252px;
`;

const Body = styled.div`
  display: flex;
  flex: 1;
  min-height: 0;
`;

const SideBar = styled.aside`
  align-items: center;
  display: flex;
  flex: none;
  flex-direction: column;
  padding-top: 8px;
  width: 26px;
`;

const SideSep = styled.span`
  border-top: 1px solid #bdbdbd;
  flex: none;
  margin: 3px 0;
  width: 22px;
`;

const SideGrip = styled.span`
  background: repeating-linear-gradient(90deg, #c4c4c4 0 2px, transparent 2px 4px);
  flex: none;
  height: 2px;
  margin: ${props => (props.$first ? '0 0 4px' : '5px 0')};
  width: 14px;
`;

const SideMore = styled.button`
  ${plainButton};
  height: 16px;
  width: 22px;

  &::after {
    border: 4px solid transparent;
    border-left: 5px solid #6b6b6b;
    border-right: 0;
    content: '';
  }
`;

const Workspace = styled.div`
  display: flex;
  flex: 1;
  flex-direction: column;
  min-width: 0;
`;

const Columns = styled.div`
  display: flex;
  flex: 1;
  min-height: 0;
`;

/* ---------- operations panel ---------- */

const Panel = styled.section`
  display: flex;
  flex: none;
  flex-direction: column;
  width: 315px;
`;

const PanelHead = styled.div`
  align-items: center;
  display: flex;
  height: 41px;
  padding: 0 2px 0 5px;
`;

const PanelTitle = styled.h2`
  color: #222;
  flex: 1;
  font-size: 26px;
  font-weight: 400;
  line-height: 36px;
  margin: 0;
  padding-bottom: 4px;
`;

const HeadButton = styled.button`
  ${plainButton};
  height: 19px;
  width: 19px;
`;

const G1Button = styled.button`
  ${plainButton};
  color: #9db8d6;
  font-size: 12px;
  height: 22px;
  width: 22px;
`;

const TreeArea = styled.div`
  background: #fafafa;
  border-bottom: 1px solid #e2e2e2;
  display: flex;
  flex: 1;
  flex-direction: column;
  min-height: 0;
  padding: 6px 2px 22px;
`;

const TreeBox = styled.div`
  background: #fff;
  border: 1px solid #bcbcbc;
  display: flex;
  flex: 1;
  flex-direction: column;
  min-height: 0;
  padding: 1px;
`;

const Tree = styled.ul`
  color: #000;
  flex: 1;
  font-family: ${treeFont};
  font-size: 11px;
  line-height: 16px;
  list-style: none;
  margin: 0;
  min-height: 0;
  overflow: hidden;
  padding: 0;
`;

const TreeRow = styled.li`
  align-items: center;
  display: flex;
  height: 16px;
  padding-left: 3px;
  white-space: pre;
`;

const Guide = styled.svg`
  display: block;
  flex: none;
  height: 16px;
  width: 19px;
`;

const TreeIcon = styled.svg`
  display: block;
  flex: none;
  height: 16px;
  width: 16px;
`;

const TreeText = styled.span`
  flex: ${props => (props.$selected ? 1 : 'none')};
  height: 16px;
  margin-left: 3px;
  padding: 0 2px;
  ${props => props.$selected && 'background: #e5e5e5;'}
`;

const Korean = styled.span`
  font-size: 12px;
  line-height: 1;
`;

const ScrollBar = styled.div`
  background: #f0f0f0;
  display: grid;
  flex: none;
  grid-template-columns: 21px 172px 1fr 21px;
  height: 20px;
`;

const ScrollThumb = styled.span`
  background: #cdcdcd;
  grid-column: 2;
  margin-bottom: 1px;
`;

const ScrollEnd = styled.button`
  ${plainButton};
  ${props => (props.$last ? 'grid-column: 4;' : 'padding-right: 2px;')}
`;

const PanelTabs = styled.div`
  display: flex;
  flex: none;
  height: 26px;
`;

const Tab = styled.button`
  ${plainButton};
  color: ${props => (props.$active ? '#555' : '#111')};
  font-size: 15px;
  line-height: 22px;
  padding: 0 ${props => (props.$active ? 5 : 7)}px 4px;
  white-space: nowrap;
  ${props =>
    props.$active &&
    css`
      background: #fff;
      border: 1px solid #bcbcbc;
      border-top: 0;
    `}
`;

const folder = (
  <path d="M.500 14.500V3.500L2 2h4l1.500 1.500H14l1.500 1.500v9.500z" fill="#ff0" stroke="#000" />
);

const treeIcons = {
  machines: (
    <g fill="#0ff" stroke="#000080">
      <path d="M.500.500h6v6h-6zM8.500.500h6v6h-6zM.500 8.500h6v6h-6zM8.500 8.500h6v6h-6z" />
    </g>
  ),
  props: <path d="M3 13V6M7 13V3M11 13V6M14 13V3M1 13h14" stroke="#00f" strokeWidth="2" />,
  group: (
    <g fill="#0ff" stroke="#000080">
      <circle cx="4" cy="4.500" r="3" />
      <circle cx="12" cy="4.500" r="3" />
      <circle cx="4" cy="12" r="3" />
      <circle cx="12" cy="12" r="3" />
    </g>
  ),
  folder,
  openFolder: (
    <g stroke="#000">
      <path d="M.500 13.500v-9L2 3h4l1.500 1.500H14V14z" fill="#7a7a20" />
      <path d="M6 14l3-7h7l-3 7z" fill="#ff0" />
      <path d="M2 7l4 5 8-11" fill="none" stroke="#0b8a8a" strokeWidth="2.500" />
    </g>
  ),
  params: (
    <path d="M.500 14.500V3.500L2 1.500h5L8.500 3H14l1.500 1.500v10z" fill="#c0c0c0" stroke="#000" />
  ),
  tool: (
    <g>
      <path d="M4 1h8v10l-4 4-4-4z" fill="#000080" />
      <path d="M5 9l6-6M6 12l6-6" stroke="#fff" />
    </g>
  ),
  geometry: (
    <g>
      <path d="M0 0h16v15H0z" />
      <path d="M5 2v5M2.500 4.500h5" stroke="#0f0" />
      <path d="M13 0v9q0 3-3 4H1" fill="none" stroke="#0c0" strokeWidth="1.500" />
    </g>
  ),
  nc: (
    <g>
      <path d="M0 1h16v15H0z" />
      <path d="M0 5q4-4 8 0t8 0M0 9.500q4-4 8 0t8 0M0 14q4-4 8 0t8 0" fill="none" stroke="#fff" strokeWidth="1.500" />
    </g>
  ),
  end: (
    <g>
      <path d="M1 1l14 7L1 15z" fill="#f00" />
      <path d="M0 1h3v14H0z" fill="#900" />
    </g>
  ),
};

const tail = ' - [WCS: 평면] - [  공구평면 : 평면]';

const operations = [
  '1 - Drill/Counterbore',
  '2 - 펙드릴',
  '3 - 윤곽 (2D)',
  '4 - 윤곽 (2D)',
  '5 - 윤곽 (2D)',
  '6 - 포켓 (기본형)',
  '7 - 포켓 (기본형)',
  '8 - 포켓 (기본형)',
  '9 - 윤곽 (램프)',
  '10 - 페이싱',
  '11 - 윤곽 (2D)',
  '12 - 윤곽 (2D)',
  '13 - 윤곽 (2D)',
  '14 - 포켓 (기본형)',
  '15 - 포켓 (기본형)',
];

// each guide cell: "_"/"+" expander, "v" line passing down, "t" tee,
// "l" corner, " " blank
const treeRows = [
  { guides: '_', icon: 'machines', text: '머신 그룹-1' },
  { guides: ' +', icon: 'props', text: '속성 - Mill Default MM' },
  { guides: ' _', icon: 'group', text: '가공경로 그룹-1' },
  ...operations.map(name => ({
    guides: '  +',
    icon: 'folder',
    text: name + tail,
  })),
  {
    guides: '  _',
    icon: 'openFolder',
    text: '16 - 포켓 (기본형) - [WCS: 평면] - [  공구평면',
    selected: true,
  },
  { guides: '  vt', icon: 'params', text: '조건' },
  { guides: '  vt', icon: 'tool', text: '#5 - M10.00 평엔드밀 - 10 FLAT ENDMILL' },
  { guides: '  vt', icon: 'geometry', text: '도형 - (2) 체인' },
  {
    guides: '  vl',
    icon: 'nc',
    text: '가공경로 - 4.9K - O20210224_01 CAD MACAM',
  },
  { guides: '  l', icon: 'end', text: '' },
];

const GuideCell = ({ kind, root }) => (
  <Guide viewBox="0 0 19 16" aria-hidden="true">
    <g stroke="#000" strokeDasharray="1 1" fill="none">
      {kind !== ' ' && !root && (
        <path d={kind === 'l' ? 'M8.500 0v8' : 'M8.500 0v16'} />
      )}
      {kind !== ' ' && kind !== 'v' && <path d="M8 8.500h11" />}
    </g>
    {(kind === '+' || kind === '_') && (
      <g>
        <path d="M3.500 3.500h10v10h-10z" fill="#fff" stroke="#919191" />
        <path d="M5 8.500h7" stroke="#33508f" />
        {kind === '+' && <path d="M8.500 5v7" stroke="#33508f" />}
      </g>
    )}
  </Guide>
);

const OperationsTree = () => (
  <Tree>
    {treeRows.map((row, i) => (
      <TreeRow key={i}>
        {row.guides.split('').map((kind, k) => (
          <GuideCell key={k} kind={kind} root={i === 0} />
        ))}
        <TreeIcon viewBox="0 0 16 16" aria-hidden="true">
          {treeIcons[row.icon]}
        </TreeIcon>
        {row.text && (
          <TreeText $selected={row.selected}>
            {row.text
              .split(/([가-힣]+)/)
              .map((part, k) => (k % 2 ? <Korean key={k}>{part}</Korean> : part))}
          </TreeText>
        )}
      </TreeRow>
    ))}
  </Tree>
);

const OperationsPanel = () => (
  <Panel>
    <PanelHead>
      <PanelTitle>가공경로</PanelTitle>
      <HeadButton type="button" aria-label="menu">
        <svg width="12" height="6">
          <path d="M0 0h12L6 6z" fill="#555" />
        </svg>
      </HeadButton>
      <HeadButton type="button" aria-label="pin">
        <svg width="10" height="12">
          <path d="M2.500 7V.500h5V7M6.500 1v6M0 7.500h10M5 8v4" fill="none" stroke="#555" />
        </svg>
      </HeadButton>
      <HeadButton type="button" aria-label="close">
        <svg width="11" height="11">
          <path d="M.500.500l10 10M10.500.500l-10 10" stroke="#555" strokeWidth="1.300" />
        </svg>
      </HeadButton>
    </PanelHead>
    <ToolbarRow $height={27} $indent={2}>
      <Tools items="selAllOps~ unselOps~ | regenOps~ regenDirty~ | backplot~ verify~ simulate~" />
      <G1Button type="button">G1</G1Button>
      <Tools items="toolPost~ | highfeed~ | help~" />
    </ToolbarRow>
    <ToolbarRow $height={26} $indent={2}>
      <Tools items="lock~ toolpath~ ghost~ | down~ up~ loopArrow~ upDown~ | pathSel~ shapes~ toolAxis~ | machine~ target~" />
    </ToolbarRow>
    <TreeArea>
      <TreeBox>
        <OperationsTree />
        <ScrollBar>
          <ScrollEnd type="button" aria-label="scroll left">
            <svg width="8" height="10">
              <path d="M7 0L2 5l5 5" fill="none" stroke="#444" strokeWidth="2" />
            </svg>
          </ScrollEnd>
          <ScrollThumb />
          <ScrollEnd type="button" aria-label="scroll right" $last>
            <svg width="8" height="10">
              <path d="M1 0l5 5-5 5" fill="none" stroke="#444" strokeWidth="2" />
            </svg>
          </ScrollEnd>
        </ScrollBar>
      </TreeBox>
    </TreeArea>
    <PanelTabs>
      <Tab type="button" $active>
        가공경로
      </Tab>
      <Tab type="button">아트</Tab>
    </PanelTabs>
  </Panel>
);

/* ---------- graphics view ---------- */

const View = styled.section`
  border-left: 1px solid #e5e5e5;
  display: flex;
  flex: 1;
  flex-direction: column;
  margin-left: 3px;
  min-width: 0;
`;

const Canvas = styled.div`
  background: linear-gradient(#003f3f, #00827f);
  flex: 1;
  min-height: 0;
  overflow: hidden;

  svg {
    display: block;
    height: 100%;
    width: 100%;
  }

  .cad {
    fill: #00ff00;
    font-family: Lato, sans-serif;
    font-weight: 100;
    stroke: #00ff00;
    stroke-width: 0.4;
    text-anchor: middle;
  }

  .mark {
    font-family: 'DejaVu Sans', 'Noto Sans CJK KR', sans-serif;
    font-size: 11px;
    font-weight: 700;
    text-anchor: middle;
  }
`;

const ViewTabs = styled.div`
  background: #f0f0f0;
  border-top: 3px double #c4c4c4;
  display: flex;
  flex: none;
  height: 31px;
`;

const ViewTab = styled(Tab)`
  border: 0;
  padding: 2px 5px 0;
`;

const ViewTabRest = styled.div`
  border-left: 1px solid #bcbcbc;
  border-top: 1px solid #bcbcbc;
  box-shadow: 0 -3px #fff;
  flex: 1;
  margin-top: 3px;
`;

// faceted arc, the way the display approximates curves
const facets = (cx, cy, r, from, to, n) => {
  const pts = [];
  for (let i = 0; i <= n; i += 1) {
    const a = ((from + ((to - from) * i) / n) * Math.PI) / 180;
    pts.push(
      `${(cx + r * Math.sin(a)).toFixed(1)},${(cy - r * Math.cos(a)).toFixed(1)}`
    );
  }
  return pts.join(' ');
};

const Bore = ({ x, y }) => (
  <g transform={`translate(${x} ${y})`}>
    <polyline points={facets(0, 0, 50.5, 10, 370, 18)} />
    <polyline points="-60,-22 -49.300,-40 -35.300,-52.500 -17,-61 3,-63.500 22,-60 39.600,-50 53,-35 61.600,-18 63.600,1 60,21.600 50.600,38.500 35.600,52 17,61 -1.400,63.500 -21.300,59.500" />
    <path d="M-10.500-.500h22M0-11v22" />
  </g>
);

const Axes = ({ y, origin }) => (
  <g>
    <path d={`M400.500 ${y}v-20`} stroke="#0a9a1e" strokeWidth="2" />
    <path d={`M400 ${y - 34}l3 14h-6z`} fill="#00b410" />
    <path d={`M401 ${y}h21`} stroke="#b40000" strokeWidth="2" />
    <path d={`M436 ${y}l-14-3v6z`} fill="#a00000" />
    <text className="mark" x="402" y={y - 39} fill="#00ff00">
      Y
    </text>
    <text className="mark" x="443" y={y + 4} fill="#ff0000">
      X
    </text>
    {origin && (
      <text className="mark" x="401" y={y + 11} fill="#ffffff">
        C
      </text>
    )}
  </g>
);

const Drawing = () => (
  <svg aria-label="graphics view">
    <g transform="translate(-345 -203)">
      <path d="M345 233H4000" stroke="#a01818" strokeWidth="2" />
      <path d="M314 233H4000" stroke="#00c828" strokeWidth="2" strokeDasharray="12 12 12 12 12 36" />
      <g fill="none" stroke="#00ff00" strokeWidth="1.200">
        <polyline points="345,353 351,337 362,322 380,307 400,299 419,296.500 4000,296.500" />
        <polyline
          points={`389,345 391.700,365 399.600,384 411.700,400 428.700,413 447.700,421 469,423.500 ${facets(547, 582.5, 159, 0, 180, 16)} 468,741.500 447,744 428,752 411.700,765 399.600,781 391.700,800 389,820 389,2000`}
        />
        <polyline points={`389,344.500 ${facets(1390, 344.5, 159, 270, 348.75, 7).split(' ')[0]}`} />
        <polyline points="1231,344.500 1234,375.500 1243,405.500 1258,433 1277.500,457 1302,477 1329,491.500 1359,499.500" />
        <polyline points={facets(547.5, 582.5, 127, 0, 360, 28)} />
        <path d="M345 370L712 755M461 491l-33-47M461 491l-46-34M635 674l45 34M635 674l32 47" />
        <path d="M345 313l19-18M366 293l6 3" />
        <polyline points={facets(913, 551, 158.5, 6, 366, 30)} />
        <polyline points="755,694 1072,694 1095,696.500 1117,705 1135,717.600 1151,735.600 1161.600,756 1166.700,777.500 1166.700,801 1161.600,822 1151,843 1135,860.600 1117,873.500 1096,882 1073,884.500 755,884.500 731,882 710,873.500 691.500,861 676,844 665,823 659.700,801 659.700,778 665,755 675.700,735 691.700,717 709,705 730,697.300 755,694" />
        <Bore x={913} y={551} />
        <Bore x={1072} y={789.5} />
        <polyline points="1295.500,689 1295.500,668.500 1301,650 1312.600,634 1328.600,622 1347,615.300 1372,615.300" />
        <polyline points={facets(1358, 678.5, 52.5, 10, 370, 18)} />
        <path d="M1347.500 678.500h21M1358 667v22" />
        <polyline points="1372,575.500 1345,575.500 1321,582 1299,593.500 1280.500,610 1266.600,629.500 1258,653 1255,677.500 1255,791 1258,833 1267,878 1283,918.500 1304.500,957.500 1317,974" />
        <polyline points="919,974 928.400,962.500 952,943.500 979,928.500 1010,919 1040,916 1071,919 1101.400,928.500 1129,943.500 1152,962.500 1162,974" />
        <polyline points="964,974 985,960.500 1013,951 1040,948 1068,951 1095.600,960.500 1116.500,974" />
        <path d="M713 940l82 34M756 887l-15 36" />
        <ellipse cx="535.700" cy="554.700" rx="10" ry="20" />
        <path d="M420.500 376v1M467.500 821h1M754 789.500h1" />
      </g>
      <g fill="none" stroke="#0a84f0" strokeWidth="1.200">
        <circle cx="912.700" cy="551" r="79.500" />
        <path d="M903 551l-25 71.500" />
      </g>
      <text className="cad" x="868" y="478" fontSize="48">ñí</text>
      <text className="cad" x="961" y="478" fontSize="56">5</text>
      <text className="cad" x="843" y="784" fontSize="48">ñí</text>
      <text className="cad" x="840" y="840" fontSize="54">8</text>
      <text className="cad" x="536" y="566" fontSize="32">R</text>
      <text className="cad" x="583" y="575" fontSize="42">Ó</text>
      <text className="cad" x="507" y="622" fontSize="36">°</text>
      <text className="cad" x="526" y="630" fontSize="38">Ü</text>
      <text className="cad" fontSize="72" transform="translate(757 931) rotate(22)">1</text>
      <text className="cad" fontSize="72" transform="translate(782 941) rotate(26)">6</text>
      <text className="cad" fontSize="72" transform="translate(350 338) rotate(47)">1</text>
      <text className="cad" fontSize="72" transform="translate(366 356) rotate(49)">6</text>
      <Axes y={258} origin />
      <Axes y={918} />
      <text className="mark" x="376" y="961" fill="#ffffff">평면</text>
    </g>
  </svg>
);

/* ---------- status bar ---------- */

const StatusBar = styled.footer`
  align-items: flex-start;
  background: #606060;
  color: #fff;
  display: flex;
  flex: none;
  font-size: 14px;
  gap: 2px;
  height: 14px;
  line-height: 20px;
  overflow: hidden;
  padding: 2px 0 0 4px;
`;

const StatusText = styled.span`
  flex: 1;
  padding-top: 2px;
  white-space: pre;
`;

const StatusButton = styled.button`
  background: ${props => (props.$muted ? '#f0f0f0' : '#fff')};
  border: 1px solid #c8c8c8;
  color: #222;
  flex: none;
  height: 24px;
  line-height: 20px;
  padding: 0;
  width: ${props => props.$width}px;
`;

const DepthBox = styled.div`
  background: #fff;
  border: 1px solid #c8c8c8;
  color: #333;
  display: flex;
  flex: none;
  height: 24px;
  padding: 2px;
  width: 108px;
`;

const DepthInput = styled.input`
  background: linear-gradient(90deg, #0078d7 20px, #ffff80 20px);
  border: 0;
  color: #fff;
  height: 20px;
  padding: 0;
  width: 80px;
`;

const Status = () => (
  <StatusBar>
    <StatusText>WCS: 평면  T/Cplane: 평면</StatusText>
    <StatusButton $width={30}>3D</StatusButton>
    <StatusButton $width={76}>그래픽뷰</StatusButton>
    <StatusButton $width={53}>WCS</StatusButton>
    <StatusButton $width={32}>평면</StatusButton>
    <StatusButton $width={14} $muted>
      Z
    </StatusButton>
    <DepthBox>
      <DepthInput aria-label="Z depth" defaultValue="0.0" />
      <ArrowButton type="button" aria-label="Z depth list" />
    </DepthBox>
    <StatusButton $width={40} aria-label="levels">
      <svg width="12" height="14">
        <path d="M.500.500h7v7h-7zM4.500 4.500h7v7h-7z" fill="none" stroke="#333" />
      </svg>
    </StatusButton>
    <StatusButton $width={8} aria-label="attributes" />
  </StatusBar>
);

/* ---------- app ---------- */

const menus = [
  'F:파일',
  'E:수정',
  'V:뷰',
  'A:측정',
  'C:그리기',
  'S:솔리드',
  'P:모델 수정',
  'X:이동',
  'M:머신 형태',
  'T:가공경로',
  'R:화면',
  '아트',
  'I:설정',
  'H:도움말',
];

const coords = [
  ['X', '13.27487'],
  ['Y', '54.61913'],
  ['Z', '0.0'],
];

const sideTools = [
  'extrude revolveSolid sweepSolid loftSolid | filletSolid > chamferSolid > |',
  'shell boolean draft > | pushPull moveSolid > pattern > simplify findFeature layout :',
  'selSolid modify splitSolid | editSolid editFillet removeFillet |',
  'holeAxis removeFace historyCube undoCube | faceColor bodyColor clearFace clearBody',
]
  .join(' ')
  .split(' ');

const SideTools = () => (
  <SideBar>
    <SideGrip $first />
    {sideTools.map((name, i) => {
      if (name === '|') return <SideSep key={i} />;
      if (name === ':') return <SideGrip key={i} />;
      if (name === '>') {
        return <SideMore key={i} type="button" aria-label="more" />;
      }
      return (
        <IconButton key={i} type="button" aria-label={name}>
          <Icon name={name} />
        </IconButton>
      );
    })}
  </SideBar>
);

const App = () => (
  <Page>
    <GlobalStyle />
    <TitleBar>
      <AppLogo viewBox="0 0 20 20" aria-hidden="true">
        <path d="M0 2h6l4 6 3-7h6l-7 10 4 8h-6l-3-6-3 6H0l6-9z" fill="#2a2a2a" />
        <path d="M2 3h3l9 15h-3z" fill="#c9d3dc" />
        <path d="M7 1l3 6 1 3 4-8 2 0-7 14-1-5 1-3z" fill="#3d86b5" />
        <path d="M15 6l3-3-1 7-3 2z" fill={gold} />
      </AppLogo>
      {'Mastercam 밀링 X9  C:\\Users\\toysk\\Desktop\\O20210224_01 CAD MACAM X9 MCT 2D.mcx-9'}
    </TitleBar>
    <MenuBar>
      {menus.map(m => (
        <MenuItem key={m} type="button">
          {m}
        </MenuItem>
      ))}
    </MenuBar>
    <ToolbarRow>
      <Tools items=": new open save print preview : undo redo : fit repaint | zoomWindow zoomTarget zoomSelect | unzoomBack unzoom | rotate prevView nextView : topView frontView rightView isoView :: planes+ : globe+ sphere+ shade shadeGreen shadeRed shadeHalf : pencil pencils+ | pencilBack+ : analyze analyzeDist remap | gear list sigma tiles+" />
    </ToolbarRow>
    <ToolbarRow>
      <Tools items=": point+ line+ arc+ rect+ fillet+ spline+ cylinder+ surface+ : trim cross+ : xformDyn xformMove xformRotate mirror scale moveOrigin translate project || offset+ array stretch+ : smartDim note || dimH+ dimV+ | hatch+ : netSurf ruled revolve sweep extrudeSurf+ | trimSurf filletSurf cubeGrid | meshA+ meshB+ meshC+" />
    </ToolbarRow>
    <ToolbarRow $height={32}>
      <Grip />
      {coords.map(([axis, value]) => (
        <React.Fragment key={axis}>
          <AxisLabel htmlFor={`coord-${axis}`}>{axis}</AxisLabel>
          <CoordBox>
            <input id={`coord-${axis}`} defaultValue={value} />
            <ArrowButton type="button" aria-label={`${axis} history`} $faded />
          </CoordBox>
        </React.Fragment>
      ))}
      <Tools items="bolt~ gearAdd~ crossPoint~+ help :: selChain | selInside | selRotate || selWindow+ || lineStyle+ cursor~ cubeCheck~ | cubeFace~ cubeSide~ cubeBlue~ | cubeSplit backSel | clockSel! clipSel | stop~ ok~ help" />
    </ToolbarRow>
    <Body>
      <SideTools />
      <Workspace>
        <Ribbon>리본 바</Ribbon>
        <Columns>
          <OperationsPanel />
          <View>
            <Canvas>
              <Drawing />
            </Canvas>
            <ViewTabs>
              <ViewTab type="button" $active>
                메인 뷰시트
              </ViewTab>
              <ViewTabRest />
            </ViewTabs>
          </View>
        </Columns>
      </Workspace>
    </Body>
    <Status />
  </Page>
);

export default App;
